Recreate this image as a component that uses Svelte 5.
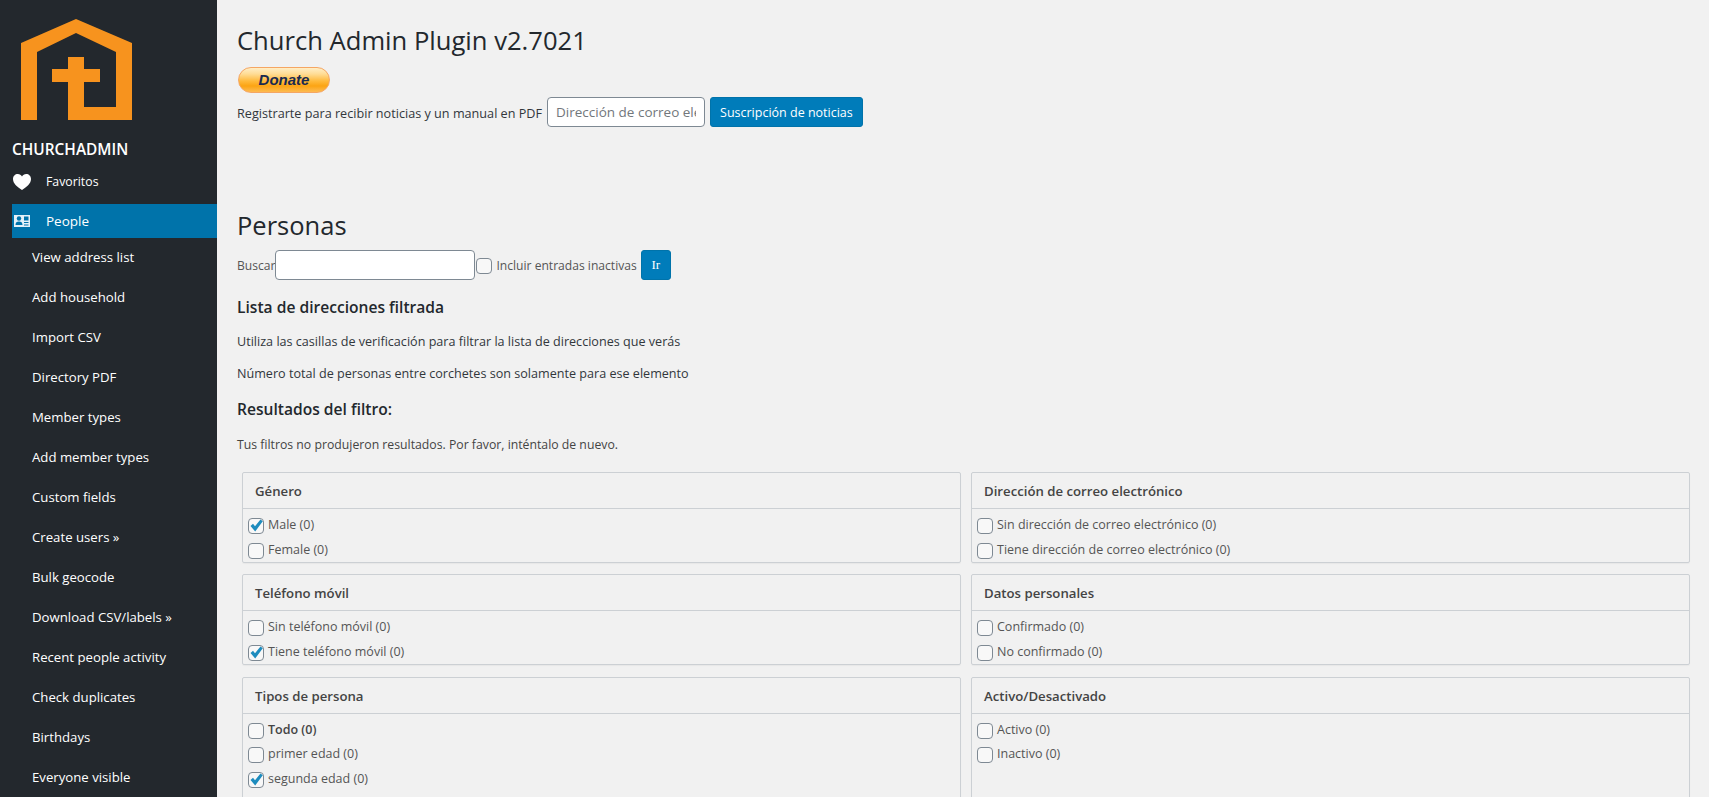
<script>
  const menu = [
    "View address list", "Add household", "Import CSV", "Directory PDF", "Member types",
    "Add member types", "Custom fields", "Create users »", "Bulk geocode", "Download CSV/labels »",
    "Recent people activity", "Check duplicates", "Birthdays", "Everyone visible"
  ];

  const rows = [
    [
      { title: "Género", items: [["Male (0)", true], ["Female (0)", false]] },
      { title: "Dirección de correo electrónico", items: [["Sin dirección de correo electrónico (0)", false], ["Tiene dirección de correo electrónico (0)", false]] }
    ],
    [
      { title: "Teléfono móvil", items: [["Sin teléfono móvil (0)", false], ["Tiene teléfono móvil (0)", true]] },
      { title: "Datos personales", items: [["Confirmado (0)", false], ["No confirmado (0)", false]] }
    ],
    [
      { title: "Tipos de persona", items: [["Todo (0)", false], ["primer edad (0)", false], ["segunda edad (0)", true]] },
      { title: "Activo/Desactivado", items: [["Activo (0)", false], ["Inactivo (0)", false]] }
    ]
  ];
</script>

<div class="page">
  <aside class="sidebar">
    <svg class="logo" width="144" height="130" viewBox="0 0 144 130">
      <path fill="#f7931e" d="M76 19 21 43V120H37V52L76 33 116 52V107H84V82H100V69H84V57H68V69H52V82H68V120H132V43Z" />
    </svg>
    <div class="brand">CHURCHADMIN</div>
    <div class="top-item fav">
      <svg class="ico heart" width="20" height="18" viewBox="0 0 20 18">
        <path fill="#fff" d="M10 17C5 13.500 1 10.500 1 6 1 3 3.200 1 5.800 1 7.600 1 9.200 2 10 3.400 10.800 2 12.400 1 14.200 1 16.800 1 19 3 19 6 19 10.500 15 13.500 10 17Z" />
      </svg>
      <span>Favoritos</span>
    </div>
    <div class="top-item active">
      <svg class="ico" width="18" height="14" viewBox="0 0 18 14">
        <path fill="#e4f1f8" d="M1 1H17V13H1Z" />
        <circle fill="#0073aa" cx="6" cy="4.500" r="2.200" />
        <path fill="#0073aa" d="M2.500 11C2.500 8.500 3.800 7.500 6 7.500S9.500 8.500 9.500 11ZM11 2.500H15.500V6.500H11ZM11 8H15.500V9H11ZM11 10.500H15.500V11.500H11Z" />
      </svg>
      <span>People</span>
    </div>
    <nav class="submenu">
      {#each menu as item}
        <div class="sub-item">{item}</div>
      {/each}
    </nav>
  </aside>

  <main class="content">
    <h1>Church Admin Plugin v2.7021</h1>
    <div class="donate"><span>Donate</span></div>
    <form class="signup">
      <span class="signup-text">Registrarte para recibir noticias y un manual en PDF</span>
      <input class="email" type="text" placeholder="Dirección de correo electrónico" />
      <button type="button" class="btn">Suscripción de noticias</button>
    </form>

    <h2>Personas</h2>
    <div class="search">
      <span>Buscar</span>
      <input class="search-box" type="text" />
      <span class="box"></span>
      <span class="inc">Incluir entradas inactivas</span>
      <button type="button" class="btn go">Ir</button>
    </div>

    <h3 class="first">Lista de direcciones filtrada</h3>
    <p class="strong">Utiliza las casillas de verificación para filtrar la lista de direcciones que verás</p>
    <p class="strong">Número total de personas entre corchetes son solamente para ese elemento</p>
    <h3>Resultados del filtro:</h3>
    <p class="note">Tus filtros no produjeron resultados. Por favor, inténtalo de nuevo.</p>

    <div class="panels">
      {#each rows as row}
        {#each row as panel}
          <section class="panel">
            <header>{panel.title}</header>
            <div class="panel-body">
              {#each panel.items as [label, on]}
                <div class="check" class:bold={label.startsWith("Todo")}>
                  <span class="box">
                    {#if on}
                      <svg width="16" height="16" viewBox="0 0 16 16">
                        <path fill="#1e8cbe" d="M2.500 8 5 5.800 7 8.200 12.500 1.500 14.800 3.300 7.200 13.500Z" />
                      </svg>
                    {/if}
                  </span>
                  <span>{label}</span>
                </div>
              {/each}
            </div>
          </section>
        {/each}
      {/each}
    </div>
  </main>
</div>

<style>
  :global(body) {
    margin: 0;
    overflow: hidden;
    background: #f1f1f1;
  }

  .page {
    display: flex;
    height: 797px;
    overflow: hidden;
    font-family: "Open Sans", "Liberation Sans", sans-serif;
    font-size: 12.6px;
    color: #444;
  }

  .sidebar {
    width: 217px;
    flex-shrink: 0;
    background: #23282d;
    color: #fff;
    padding-left: 12px;
    box-sizing: border-box;
  }

  .logo {
    display: block;
    margin-left: -12px;
  }

  .brand {
    margin-top: 10px;
    font-size: 15.4px;
    line-height: 20px;
    font-weight: 600;
  }

  .top-item {
    display: flex;
    align-items: center;
  }

  .top-item.fav {
    height: 24px;
    margin-top: 9px;
    font-size: 12.3px;
  }

  .top-item.active {
    height: 34px;
    margin-top: 11px;
    background: #0073aa;
    font-size: 13.5px;
  }

  .ico {
    width: 20px;
    margin-right: 14px;
  }

  .heart {
    margin-top: 2px;
  }

  .sub-item {
    height: 40px;
    line-height: 40px;
    padding-left: 20px;
    font-size: 13.2px;
  }

  .submenu {
    margin-top: -1px;
  }

  .content {
    flex: 1;
    padding: 0 19px 0 20px;
    min-width: 0;
  }

  h1 {
    margin: 25px 0 0;
    font-size: 25.6px;
    line-height: 32px;
    font-weight: 500;
    color: #23282d;
  }

  .donate {
    width: 92px;
    height: 26px;
    margin: 10px 0 0 1px;
    box-sizing: border-box;
    border: 1px solid #f5a663;
    border-radius: 13px;
    background: linear-gradient(#ffeec6 0, #ffdc95 25%, #ffb93a 55%, #fca413 75%, #fdbb52 100%);
    text-align: center;
  }

  .donate span {
    font: italic bold 15px/23px "Liberation Sans", sans-serif;
    color: #1a2a50;
  }

  .signup {
    display: flex;
    align-items: center;
    height: 30px;
    margin-top: 4px;
    font-weight: 500;
    font-size: 12.65px;
    color: #32373c;
  }

  .signup-text {
    padding-top: 1px;
  }

  .email {
    width: 158px;
    height: 30px;
    margin-left: 5px;
  }

  input {
    box-sizing: border-box;
    padding: 0 8px;
    border: 1px solid #7e8993;
    border-radius: 4px;
    background: #fff;
    font: 13.5px "Open Sans", sans-serif;
    color: #32373c;
  }

  input::placeholder {
    color: #72777c;
    opacity: 1;
  }

  .btn {
    height: 30px;
    margin-left: 5px;
    padding: 0 9px;
    border: 1px solid #0073aa;
    border-radius: 3px;
    background: #007cba;
    color: #fff;
    font: 12.5px "Open Sans", sans-serif;
  }

  h2 {
    margin: 81px 0 0;
    font-size: 25.500px;
    line-height: 34px;
    font-weight: 500;
    color: #23282d;
  }

  .search {
    display: flex;
    align-items: center;
    height: 30px;
    margin-top: 8px;
    color: #555;
    font-size: 12.1px;
  }

  .search-box {
    width: 200px;
    height: 30px;
  }

  .search .box {
    margin-left: 1px;
    margin-top: 2px;
  }

  .inc {
    margin-left: 4px;
  }

  .go {
    width: 30px;
    margin-left: 4px;
    padding: 0;
    font-family: "Liberation Serif", serif;
    font-size: 13px;
  }

  h3 {
    margin: 16px 0 0;
    font-size: 15.6px;
    line-height: 22px;
    font-weight: 600;
    color: #23282d;
  }

  p {
    margin: 16px 0 0;
    line-height: 16px;
    color: #444;
  }

  p.strong {
    font-weight: 500;
    color: #32373c;
  }

  p.note {
    margin-top: 17px;
    font-size: 12.25px;
  }

  .panels {
    display: grid;
    grid-template-columns: 1fr 1fr;
    gap: 11.6px 10px;
    margin: 19px 0 0 5px;
  }

  .panel {
    border: 1px solid #ccd0d4;
    border-radius: 2px;
    box-shadow: 0 1px 1px rgba(0, 0, 0, 0.04);
  }

  .panel:nth-last-child(-n + 2) .panel-body {
    min-height: 120px;
  }

  .panel header {
    height: 35px;
    line-height: 37px;
    padding-left: 12px;
    border-bottom: 1px solid #ccd0d4;
    font-size: 13.2px;
    font-weight: 600;
    color: #444;
  }

  .panel-body {
    padding: 3px 0 0.5px 5px;
  }

  .check {
    display: flex;
    align-items: center;
    gap: 4px;
    height: 24.7px;
    font-size: 12.5px;
    color: #555;
  }

  .check.bold {
    font-weight: 600;
    color: #444;
  }

  .check .box {
    margin-top: 3px;
  }

  .box {
    width: 16px;
    height: 16px;
    flex-shrink: 0;
    box-sizing: border-box;
    border: 1px solid #7e8993;
    border-radius: 4px;
    background: #f8f8f8;
    display: inline-block;
  }

  .box svg {
    display: block;
    margin: -1px;
  }
</style>
